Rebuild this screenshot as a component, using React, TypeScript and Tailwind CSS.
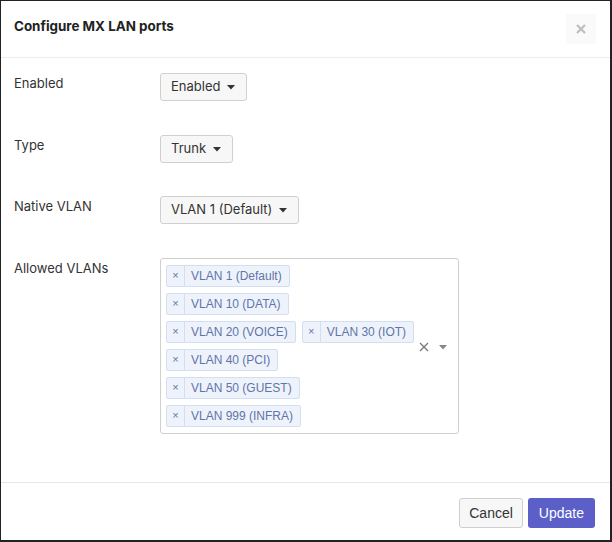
import React from "react";

const Caret = () => (
  <svg width="8" height="5" viewBox="0 0 8 5" className="ml-[7px]">
    <path d="M0 0 L8 0 L4 4.5 Z" fill="#333" />
  </svg>
);

const Dropdown = ({ label }: { label: string }) => (
  <div className="h-[28px] flex items-center pl-[10px] pr-[11px] bg-[#f7f7f7] border border-[#d0d0d0] rounded-[3px] text-[13px] text-[#333]">
    <span>{label}</span>
    <Caret />
  </div>
);

const tagRows = [
  ["VLAN 1 (Default)"],
  ["VLAN 10 (DATA)"],
  ["VLAN 20 (VOICE)", "VLAN 30 (IOT)"],
  ["VLAN 40 (PCI)"],
  ["VLAN 50 (GUEST)"],
  ["VLAN 999 (INFRA)"],
];

const Tag = ({ label }: { label: string }) => (
  <div className="h-[22px] flex items-stretch border border-[#d3dff1] bg-[#eef3fb] rounded-[2px] text-[#6175aa] font-['Liberation_Sans',Arial,sans-serif] text-[12px]">
    <span className="w-[18px] flex items-center justify-center border-r border-[#d3dff1] text-[11px]">×</span>
    <span className="flex items-center pl-[6px] pr-[7px]">{label}</span>
  </div>
);

export default function App() {
  return (
    <div className="w-[612px] h-[542px] bg-white border-t border-l border-r-2 border-b-2 border-[#222] flex flex-col font-['Inter',sans-serif] text-[#333]">
      <div className="h-[57px] relative border-b border-[#ececec] shrink-0">
        <div className="pl-[13px] pt-[15px] text-[13.4px] font-bold text-[#222]">Configure MX LAN ports</div>
        <div className="absolute left-[565px] top-[13px] w-[30px] h-[30px] bg-[#fafafa] flex items-center justify-center">
          <svg width="10" height="10" viewBox="0 0 10 10">
            <path d="M1 1 L9 9 M9 1 L1 9" stroke="#bdbdbd" strokeWidth="2.2" />
          </svg>
        </div>
      </div>
      <div className="flex-1 pt-[15px] pl-[13px] text-[13px]">
        <div className="flex items-start">
          <div className="w-[146px] pt-[1px] leading-[18px]">Enabled</div>
          <Dropdown label="Enabled" />
        </div>
        <div className="flex items-start mt-[34px]">
          <div className="w-[146px] pt-[1px] leading-[18px]">Type</div>
          <Dropdown label="Trunk" />
        </div>
        <div className="flex items-start mt-[33px]">
          <div className="w-[146px] pt-[1px] leading-[18px]">Native VLAN</div>
          <Dropdown label="VLAN 1 (Default)" />
        </div>
        <div className="flex items-start mt-[34px]">
          <div className="w-[146px] pt-[1px] leading-[18px]">Allowed VLANs</div>
          <div className="w-[299px] h-[176px] border border-[#cfcfcf] rounded-[3px] flex items-center pl-[5px]">
            <div className="w-[251px] flex flex-col gap-y-[6px] -mt-[1px]">
              {tagRows.map((row, i) => (
                <div key={i} className="flex gap-x-[6px]">
                  {row.map((t) => (
                    <Tag key={t} label={t} />
                  ))}
                </div>
              ))}
            </div>
            <div className="flex items-center ml-[2px] mt-[2px]">
              <svg width="10" height="10" viewBox="0 0 10 10">
                <path d="M1 1 L9 9 M9 1 L1 9" stroke="#777" strokeWidth="1.3" />
              </svg>
              <svg width="8" height="5" viewBox="0 0 8 5" className="ml-[10px]">
                <path d="M0 0 L8 0 L4 4.5 Z" fill="#888" />
              </svg>
            </div>
          </div>
        </div>
      </div>
      <div className="h-[58px] border-t border-[#e6e6e6] shrink-0 flex items-center justify-end pr-[15px] gap-[5px] pt-[3px] font-['Liberation_Sans',Arial,sans-serif] text-[14px]">
        <div className="h-[30px] px-[9px] flex items-center bg-[#f7f7f7] border border-[#cfcfcf] rounded-[3px] text-[#333]">Cancel</div>
        <div className="h-[30px] px-[11px] flex items-center bg-[#5b5fc7] rounded-[3px] text-white">Update</div>
      </div>
    </div>
  );
}
